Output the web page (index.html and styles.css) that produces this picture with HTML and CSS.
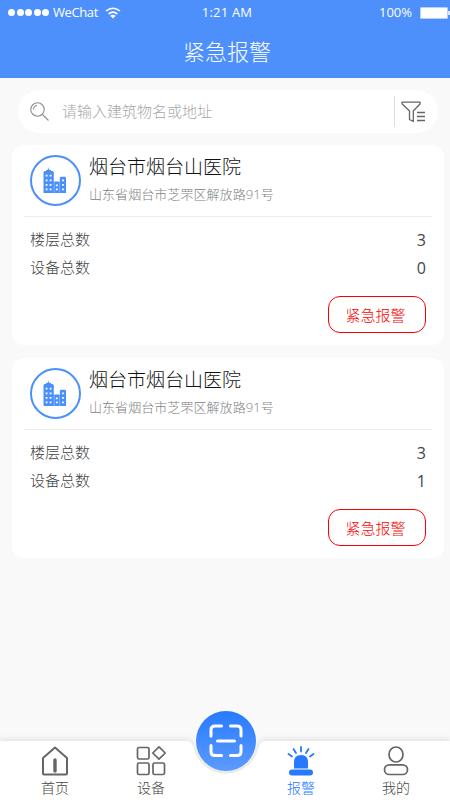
FILE: index.html
```html
<!DOCTYPE html>
<html lang="zh-CN">
<head>
<meta charset="utf-8">
<title>紧急报警</title>
<link rel="stylesheet" href="styles.css">
</head>
<body>
<svg class="defs" width="0" height="0">
  <symbol id="building" viewBox="0 0 24 27">
    <path fill="#4b8ffb" fill-rule="evenodd" d="M.5 5L1.500 4H3V3L5 2.800L5.500 0L6 2.800L8 3V4H9.500L10.800 5V15H11.500V14.500H16V15H16.800V10.500L18 9.800H22L23 10.500V26H.5ZM2.700 7.800V9.600H4.500V7.800ZM6.700 7.800V9.600H8.500V7.800ZM2.700 12.400V14.200H4.500V12.400ZM6.700 12.400V14.200H8.500V12.400ZM2.700 17V18.800H4.500V17ZM6.700 17V18.800H8.500V17ZM2.700 21.500V23.300H4.500V21.500ZM6.700 21.500V23.300H8.500V21.500ZM12.900 17.500V19.300H14.700V17.500ZM12.900 21.500V23.300H14.700V21.500ZM19.100 12.400V14.200H20.900V12.400ZM19.100 17V18.800H20.900V17ZM19.100 21.500V23.300H20.900V21.500ZM10.900 15.500V26H11.200V15.500ZM16.300 15.500V26H16.600V15.500Z"/>
  </symbol>
</svg>
<div class="app">
  <header class="header">
    <div class="status">
      <div class="carrier">
        <span class="signal"><i></i><i></i><i></i><i></i><i></i></span>
        <span>WeChat</span>
        <svg class="wifi" width="16" height="12" viewBox="0 0 16 12" fill="none" stroke="#fff" stroke-width="1.600"><path d="M1 4Q8-1.600 15 4M3.600 6.900Q8 3.300 12.400 6.900"/><path d="M5.200 8.800Q8 6.800 10.800 8.800L8 11.500Z" fill="#fff" stroke="none"/></svg>
      </div>
      <span class="time">1:21 AM</span>
      <div class="power"><span>100%</span><span class="battery"></span><span class="nub"></span></div>
    </div>
    <h1>紧急报警</h1>
  </header>
  <main>
    <div class="search">
      <svg width="20" height="20" viewBox="0 0 20 20" fill="none" stroke="#8e8e8e" stroke-width="1.100"><circle cx="7.500" cy="7.500" r="6.700"/><path d="M3.500 7.500Q3.600 4 7 3.500M12.300 12.300L14 14M14 14L18.500 18.500"/></svg>
      <span class="placeholder">请输入建筑物名或地址</span>
      <span class="filter"><svg width="25" height="22" viewBox="0 0 25 22" fill="none" stroke="#666" stroke-width="1.300"><path d="M1 1.200H19V3L12.300 10V20.500L8.500 18.500V10L1.200 3Z" stroke-linejoin="round"/><path d="M16 11.500H24M16 15.500H24M16 19.500H24"/></svg></span>
    </div>
    <section class="card">
      <div class="card-head">
        <span class="avatar"><svg width="24" height="27"><use href="#building"/></svg></span>
        <div><h2>烟台市烟台山医院</h2><p>山东省烟台市芝罘区解放路91号</p></div>
      </div>
      <dl>
        <div><dt>楼层总数</dt><dd>3</dd></div>
        <div><dt>设备总数</dt><dd>0</dd></div>
      </dl>
      <button type="button">紧急报警</button>
    </section>
    <section class="card">
      <div class="card-head">
        <span class="avatar"><svg width="24" height="27"><use href="#building"/></svg></span>
        <div><h2>烟台市烟台山医院</h2><p>山东省烟台市芝罘区解放路91号</p></div>
      </div>
      <dl>
        <div><dt>楼层总数</dt><dd>3</dd></div>
        <div><dt>设备总数</dt><dd>1</dd></div>
      </dl>
      <button type="button">紧急报警</button>
    </section>
  </main>
  <nav class="tabs">
    <svg class="tabs-bg" width="450" height="75" viewBox="0 0 450 75"><path fill="#fff" d="M0 16H186C190 16 192 18 193 21C197 38 210 48.500 226 48.500S255 38 259 21C260 18 262 16 266 16H450V75H0Z"/></svg>
    <a class="tab"><svg width="28" height="30" viewBox="0 0 28 30" fill="none" stroke="#666" stroke-width="2" stroke-linejoin="round"><path d="M2 12L14 1.500L26 12V27.500Q26 28.500 25 28.500H3Q2 28.500 2 27.500Z"/><path d="M14 14V25" stroke-width="3.400" stroke-linecap="round"/></svg><span>首页</span></a>
    <a class="tab"><svg width="30" height="30" viewBox="0 0 30 30" fill="none" stroke="#666" stroke-width="1.700" stroke-linejoin="round"><rect x="1.500" y="1.500" width="11.500" height="11.500" rx="1.500"/><path d="M23 .9L29.200 7L23 13.200L16.800 7Z"/><rect x="1.500" y="17" width="11.500" height="11.500" rx="1.500"/><rect x="17" y="17" width="11.500" height="11.500" rx="1.500"/></svg><span>设备</span></a>
    <a class="scan"><svg width="34" height="34" viewBox="0 0 34 34" fill="none" stroke="#fff" stroke-width="3" stroke-linecap="round"><path d="M2 12V6Q2 2 6 2H12.500M21.500 2H28Q32 2 32 6V12M2 21.500V27.500Q2 31.500 6 31.500H12.500M21.500 31.500H28Q32 31.500 32 27.500V21.500M8.500 17H25.500"/></svg></a>
    <a class="tab active"><svg width="28" height="30" viewBox="0 0 28 30"><path fill="#277aff" d="M7 22.500V16Q7 9 14 9T21 16V22.500Z"/><rect x="2" y="23.500" width="24" height="6" rx="3" fill="#277aff"/><path d="M14 1V5.500M6.500 3L9 7M21.500 3L19 7M1.500 8L5 10.500M26.500 8L23 10.500" stroke="#277aff" stroke-width="1.800" stroke-linecap="round"/></svg><span>报警</span></a>
    <a class="tab"><svg width="26" height="30" viewBox="0 0 26 30" fill="none" stroke="#666" stroke-width="1.700"><ellipse cx="13" cy="8.500" rx="7" ry="7.500"/><rect x="1.500" y="18.800" width="23" height="9.700" rx="4.800"/></svg><span>我的</span></a>
  </nav>
</div>
</body>
</html>
```
FILE: styles.css
```css
* { box-sizing: border-box; }
body, h1, h2, p, dl, dd { margin: 0; }
body {
  font-family: "Open Sans", "Noto Sans CJK SC", sans-serif;
  font-weight: 300;
  background: #f9f9f9;
}
h1, h2 { font-weight: 300; }
svg { display: block; }
.defs { position: absolute; }
.app { width: 450px; height: 800px; display: flex; flex-direction: column; overflow: hidden; }

.header { height: 78px; flex: none; background: #4d90fb; color: #fff; }
.status {
  height: 25px;
  display: grid;
  grid-template-columns: 1fr auto 1fr;
  align-items: center;
  padding-left: 8px;
  font-size: 13px;
  font-weight: 400;
}
.status span { line-height: 16px; }
.carrier, .power { display: flex; align-items: center; }
.carrier { letter-spacing: -.4px; }
.carrier > span:nth-child(2), .time, .power > span:first-child { padding-bottom: 2px; }
.signal { display: flex; gap: 1.5px; margin-right: 4px; }
.signal i { width: 7px; height: 7px; border-radius: 50%; background: #fff; }
.wifi { margin-left: 7px; }
.time { margin-right: 4px; letter-spacing: .2px; }
.power { justify-content: flex-end; }
.battery { width: 28px; height: 12px; margin-left: 8px; border: 1px solid #b5d0ff; border-radius: 1px; background: #fff; }
.nub { width: 2px; height: 4px; background: #dbe8ff; }
h1 { font-size: 22px; line-height: 32px; padding-top: 10px; padding-left: 4px; text-align: center; }

main { flex: 1; padding: 12px 6px 0 12px; }
.search {
  height: 43px;
  margin: 0 6px 12px;
  padding: 0 12px;
  display: flex;
  align-items: center;
  border-radius: 22px;
  background: #fff;
}
.placeholder { margin-left: 12px; padding-bottom: 2px; font-size: 15px; color: #a8a8a8; }
.filter { height: 31px; margin-left: auto; padding-left: 6px; border-left: 1px solid #ddd; display: flex; align-items: center; }

.card { height: 200px; margin-bottom: 13px; padding: 0 12px; border-radius: 12px; background: #fff; display: flex; flex-direction: column; }
.card-head { height: 72px; padding: 10px 6px 0; display: flex; gap: 8px; border-bottom: 1px solid #ececec; }
.avatar { width: 51px; height: 51px; flex: none; display: flex; align-items: center; justify-content: center; padding-right: 1px; border: 2px solid #4b8ffb; border-radius: 50%; }
h2 { font-size: 19px; line-height: 24px; color: #111; }
.card-head p { margin-top: 5px; font-size: 13px; line-height: 20px; letter-spacing: .06px; color: #808080; }
dl { padding: 9px 6px 0; }
dl div { height: 28px; display: flex; align-items: center; justify-content: space-between; }
dt { padding-bottom: 3px; font-size: 15px; color: #444; }
dd { font-size: 16px; font-weight: 400; color: #444; }
button {
  width: 98px;
  height: 37px;
  margin: 14px 6px 0 auto;
  padding: 0 3px 1px 0;
  border: 1px solid #fa0000;
  border-radius: 12px;
  background: #fff;
  color: #fa0000;
  font: inherit;
  font-size: 15px;
}

.tabs { position: relative; height: 59px; flex: none; display: grid; grid-template-columns: 110px 82px 68px 82px 108px; }
.tabs-bg { position: absolute; left: 0; bottom: 0; overflow: visible; filter: drop-shadow(0 -1px 3px rgba(0, 0, 0, .12)); }
.tab { position: relative; display: flex; flex-direction: column; align-items: center; padding-top: 5px; font-size: 14px; line-height: 20px; color: #444; }
.tab span { margin-top: 2px; }
.tab.active { color: #277aff; }
.scan {
  position: relative;
  justify-self: center;
  width: 60px;
  height: 60px;
  margin-top: -30px;
  display: flex;
  align-items: center;
  justify-content: center;
  border-radius: 50%;
  background: linear-gradient(#277aff, #5d9bff);
}
```
